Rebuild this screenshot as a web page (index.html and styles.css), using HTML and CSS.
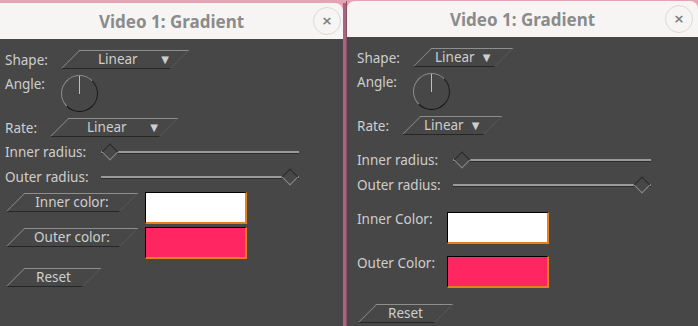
FILE: index.html
```html
<!DOCTYPE html>
<html lang="en">
<head>
    <meta charset="UTF-8">
    <meta name="viewport" content="width=device-width, initial-scale=1.0">
    <title>Video 1: Gradient</title>
    <link rel="stylesheet" href="styles.css">
</head>
<body>
<div class="desktop">

    <!-- first dialog -->
    <section class="window win-a">
        <header class="titlebar">
            <span></span>
            <span class="title">Video 1: Gradient</span>
            <button class="close">&#215;</button>
        </header>
        <div class="panel">
            <div class="row row-shape">
                <span class="label">Shape:</span>
                <div class="combo"><div class="combo-in"><span>Linear</span><span class="arrow">&#9660;</span></div></div>
            </div>
            <div class="row row-angle">
                <span class="label">Angle:</span>
                <div class="knob"></div>
            </div>
            <div class="row row-rate">
                <span class="label">Rate:</span>
                <div class="combo"><div class="combo-in"><span>Linear</span><span class="arrow">&#9660;</span></div></div>
            </div>
            <div class="sliders">
                <span class="label">Inner radius:</span>
                <div class="slider"><div class="track"></div><div class="handle at-min"></div></div>
                <span class="label">Outer radius:</span>
                <div class="slider"><div class="track"></div><div class="handle at-max"></div></div>
            </div>
            <div class="colors">
                <div class="btn btn-color"><span class="btn-in">Inner color:</span></div>
                <div class="swatch white"></div>
                <div class="btn btn-color"><span class="btn-in">Outer color:</span></div>
                <div class="swatch pink"></div>
            </div>
            <div class="btn btn-reset"><span class="btn-in">Reset</span></div>
        </div>
    </section>

    <div class="gap"></div>

    <!-- second dialog -->
    <section class="window win-b">
        <header class="titlebar">
            <span></span>
            <span class="title">Video 1: Gradient</span>
            <button class="close">&#215;</button>
        </header>
        <div class="panel">
            <div class="row row-shape">
                <span class="label">Shape:</span>
                <div class="combo"><div class="combo-in"><span>Linear</span><span class="arrow">&#9660;</span></div></div>
            </div>
            <div class="row row-angle">
                <span class="label">Angle:</span>
                <div class="knob"></div>
            </div>
            <div class="row row-rate">
                <span class="label">Rate:</span>
                <div class="combo"><div class="combo-in"><span>Linear</span><span class="arrow">&#9660;</span></div></div>
            </div>
            <div class="sliders">
                <span class="label">Inner radius:</span>
                <div class="slider"><div class="track"></div><div class="handle at-min"></div></div>
                <span class="label">Outer radius:</span>
                <div class="slider"><div class="track"></div><div class="handle at-max"></div></div>
            </div>
            <div class="colors">
                <span class="label">Inner Color:</span>
                <div class="swatch white"></div>
                <span class="label">Outer Color:</span>
                <div class="swatch pink"></div>
            </div>
            <div class="btn btn-reset"><span class="btn-in">Reset</span></div>
        </div>
    </section>

</div>
</body>
</html>
```

FILE: styles.css
```css
* {
    margin: 0;
    padding: 0;
    box-sizing: border-box;
}

body {
    background-color: #e7a3b6;
    font-family: "Noto Sans", "DejaVu Sans", sans-serif;
    overflow: hidden;
}

.desktop {
    display: flex;
    height: 326px;
    width: 698px;
    background-color: #e7a3b6;
}

.window {
    display: flex;
    flex-direction: column;
}

.win-a {
    width: 343px;
    margin-top: 3px;
}

.win-b {
    flex: 1;
    margin-top: 1px;
    border-left: 1px solid #8c4f68;
}

.gap {
    width: 3px;
    margin-top: 3px;
    background-color: #a9657f;
}

.titlebar {
    height: 36px;
    background-color: #f6f5f4;
    display: grid;
    grid-template-columns: 1fr auto 1fr;
    align-items: center;
}

.win-a .titlebar {
    border-radius: 0 8px 0 0;
}

.win-b .titlebar {
    border-radius: 8px 8px 0 0;
}

.title {
    font-size: 17px;
    font-weight: bold;
    color: #8b8b8b;
    white-space: nowrap;
}

.close {
    justify-self: end;
    width: 28px;
    height: 28px;
    border-radius: 50%;
    border: 1px solid #dcdad8;
    background: transparent;
    color: #7d7d7d;
    font-family: "DejaVu Sans", sans-serif;
    font-size: 13px;
    font-weight: bold;
    line-height: 26px;
}

.win-a .close {
    margin-right: 2px;
}

.win-b .close {
    margin-right: 5px;
}

.panel {
    flex: 1;
    background-color: #474747;
    color: #cecece;
    font-size: 13.5px;
    padding: 11px 0 0 5px;
}

.win-b .panel {
    padding-left: 10px;
}

.label {
    white-space: nowrap;
    line-height: 18px;
}

.row {
    display: flex;
    align-items: center;
    gap: 12px;
}

.row-angle {
    align-items: flex-start;
    margin-top: 6px;
}

.row-rate {
    margin-top: 6px;
}

/* slanted combo boxes and buttons */
.combo,
.btn {
    height: 19px;
    transform: skewX(-45deg);
    border: 1px solid;
    border-color: #8e8e8e #5a5a5a #262626 #8e8e8e;
    display: flex;
    margin-left: 10px;
}

.combo-in,
.btn-in {
    flex: 1;
    transform: skewX(45deg);
    display: flex;
    align-items: center;
    white-space: nowrap;
    line-height: 17px;
}

.win-a .combo {
    width: 110px;
}

.win-a .combo-in {
    justify-content: space-between;
    padding: 0 10px 0 27px;
}

.win-b .combo {
    width: 82px;
}

.win-b .combo-in {
    gap: 8px;
    padding-left: 12px;
}

.arrow {
    font-family: "DejaVu Sans", sans-serif;
    font-size: 10px;
}

.btn-in {
    justify-content: center;
}

.knob {
    width: 37px;
    height: 37px;
    border-radius: 50%;
    border: 1px solid;
    border-color: #8c8c8c #1c1c1c #111111 #8c8c8c;
    margin-left: 4px;
    position: relative;
}

.knob::after {
    content: "";
    position: absolute;
    left: 17px;
    top: 0;
    width: 1px;
    height: 18px;
    background-color: #bdbdbd;
}

/* sliders */
.sliders {
    display: grid;
    grid-template-columns: auto 198px;
    column-gap: 12px;
    row-gap: 7px;
    align-items: center;
    justify-content: start;
    margin-top: 6px;
}

.win-b .sliders {
    margin-top: 16px;
}

.slider {
    position: relative;
    height: 18px;
    display: flex;
    align-items: center;
}

.track {
    flex: 1;
    height: 3px;
    background-color: #9a9a9a;
    border-bottom: 1px solid #2e2e2e;
}

.handle {
    position: absolute;
    top: 3px;
    width: 12px;
    height: 12px;
    transform: rotate(45deg);
    background-color: #474747;
    border: 1px solid;
    border-color: #2a2a2a #8a8a8a #8a8a8a #2a2a2a;
}

.at-min {
    left: 3px;
}

.at-max {
    left: 183px;
}

/* colour pickers */
.colors {
    display: grid;
    grid-template-columns: auto 102px;
    column-gap: 16px;
    row-gap: 3px;
    align-items: start;
    justify-content: start;
    margin-top: 6px;
}

.win-b .colors {
    column-gap: 12px;
    row-gap: 12px;
    margin-top: 18px;
}

.colors .label {
    line-height: 14px;
}

.btn-color {
    width: 114px;
    margin-top: 1px;
}

.swatch {
    height: 32px;
    border-top: 1px solid #000;
    border-left: 1px solid #000;
    border-right: 2px solid #e5801f;
    border-bottom: 2px solid #e5801f;
}

.white {
    background-color: #ffffff;
}

.pink {
    background-color: #ff2662;
}

.btn-reset {
    width: 77px;
    margin-top: 9px;
}

.win-b .btn-reset {
    margin-top: 16px;
}
```
